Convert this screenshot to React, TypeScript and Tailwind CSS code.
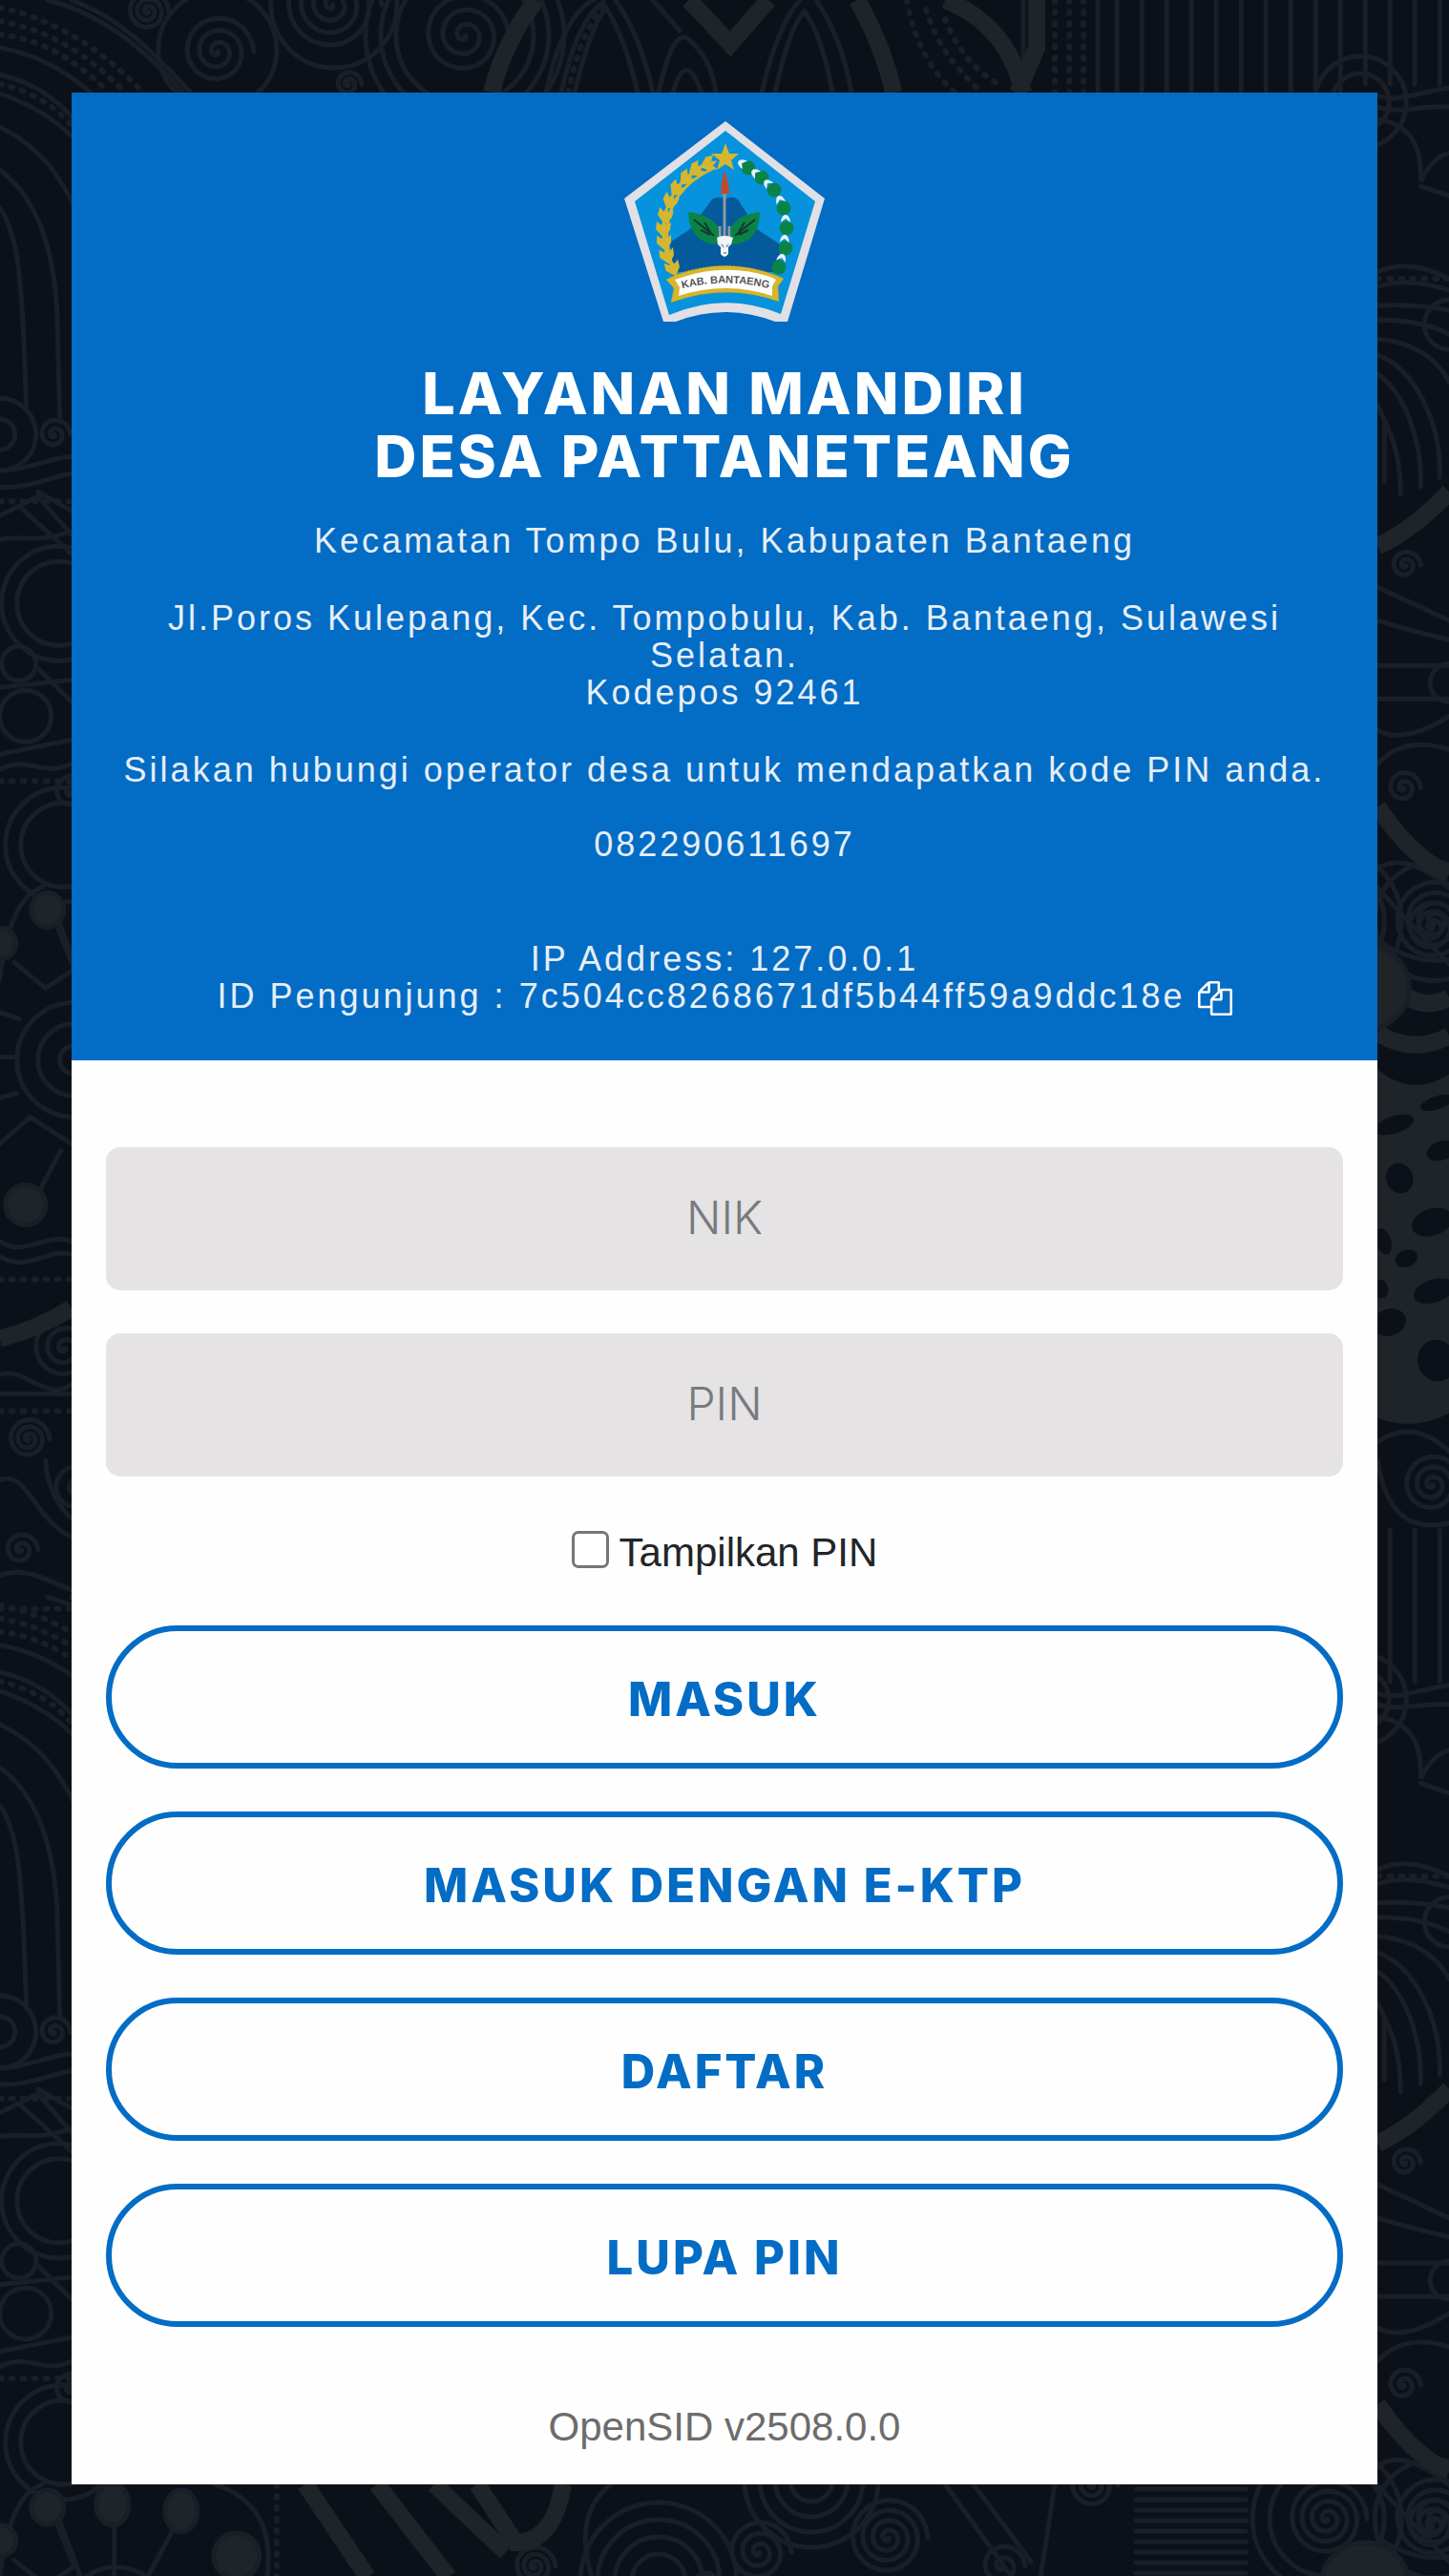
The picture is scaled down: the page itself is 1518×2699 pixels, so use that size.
import { useState } from "react";

const LINE = "#1a1e26";
const SOLID = "#1f2429";
const TILE = 1673;

function spiralPath(cx: number, cy: number, r: number, turns: number) {
  const steps = turns * 24;
  const points: string[] = [];
  for (let i = 0; i <= steps; i++) {
    const a = (i / 24) * Math.PI * 2;
    const d = (r * i) / steps;
    points.push(`${(cx + Math.cos(a) * d).toFixed(1)},${(cy + Math.sin(a) * d).toFixed(1)}`);
  }
  return "M" + points.join("L");
}

// cx, cy, radius, turns
const spirals: number[][] = [
  [155, 12, 22, 3], [228, 54, 38, 3], [348, 5, 52, 4], [487, 37, 46, 3], [57, 455, 17, 2],
  [75, 830, 20, 2], [68, 1412, 36, 3], [30, 1507, 22, 3], [80, 1560, 28, 2], [22, 1623, 18, 2],
  [1472, 592, 16, 2], [1470, 825, 18, 2], [1500, 971, 28, 3], [1500, 1555, 32, 3], [365, 88, 14, 2],
  [795, 1000, 34, 3], [930, 985, 42, 4], [1145, 930, 26, 3], [1390, 965, 42, 4], [1502, 965, 44, 4],
  [1050, 1015, 24, 2], [560, 1015, 22, 3],
];

// cx, cy, radius
const rings: number[][] = [
  [228, 52, 62], [487, 37, 72], [487, 37, 88], [487, 37, 104], [350, 5, 66], [0, 455, 38], [0, 455, 16],
  [62, 632, 44], [62, 632, 60], [20, 695, 18], [27, 750, 27], [66, 885, 44], [66, 885, 60],
  [78, 1110, 15], [78, 1110, 38], [78, 1110, 60], [690, 1030, 82], [690, 1030, 64], [690, 1030, 46],
  [690, 1030, 28], [850, 925, 22], [850, 925, 38], [850, 925, 54], [850, 925, 70], [1390, 965, 60],
  [1390, 965, 78], [1502, 965, 62], [1425, 107, 48], [1425, 107, 30], [1518, 340, 26], [1518, 715, 20],
];

const lines = [
  "M50 0C110 15 155 55 195 100", "M75 0C130 20 165 60 200 97", "M0 50C40 57 70 75 95 97",
  "M0 78C40 88 60 105 78 125", "M0 98C30 108 55 122 78 145", "M0 133C45 155 62 185 78 215",
  "M0 178C50 215 58 290 60 325L63 440", "M0 218C20 245 22 300 25 350L28 430",
  "M0 492C20 495 50 480 75 478", "M0 510C30 512 50 500 75 496", "M0 540L40 520L75 560M20 530L75 580M40 515L75 535",
  "M0 565C25 560 40 570 75 556", "M0 720L75 712M40 700L75 735", "M0 790L75 775M0 806C30 790 45 815 75 800",
  "M60 970L78 1015M15 1008L48 1035L78 1015", "M0 1060L20 1067M0 1107H17M0 1150L18 1145M0 1198L32 1170L78 1200",
  "M40 1250L64 1205", "M0 1300C25 1318 50 1290 75 1300M0 1316C30 1334 50 1306 75 1314",
  "M0 1440C25 1430 50 1470 75 1450M0 1460H75", "M0 1550C30 1540 35 1590 75 1610M48 1530C50 1570 75 1590 75 1590",
  "M0 1650C25 1640 50 1655 75 1665",
  "M572 97Q590 15 622 0M602 97Q618 30 635 8Q655 40 668 97M588 97Q605 20 632 2M645 0Q672 40 684 97",
  "M690 97Q705 30 720 40Q745 60 750 97M705 97Q718 50 735 97M684 0L712 32",
  "M798 97Q815 25 838 0M812 97Q826 30 843 12Q862 40 872 97M855 0Q882 40 892 97",
  "M1072 0V60M1150 0V97", "M1443 100C1460 108 1480 98 1518 92M1443 112C1465 120 1490 110 1518 112",
  "M1443 125C1475 130 1490 150 1488 190Q1500 165 1518 160M1488 195L1518 205",
  "M1443 285Q1475 270 1518 292M1443 300Q1475 290 1518 304",
  "M1443 320Q1480 318 1518 325M1443 335Q1490 335 1518 350M1443 355C1480 358 1505 375 1518 400",
  "M1443 372C1480 385 1510 440 1508 500M1443 392C1470 410 1490 460 1488 510M1443 425C1455 450 1467 470 1467 518M1450 440V505",
  "M1443 615L1518 650M1443 650Q1475 660 1518 670M1443 697H1518M1443 732H1518M1443 765Q1470 780 1518 750",
  "M1443 800Q1470 770 1518 785M1443 910Q1470 890 1518 930M1443 930Q1470 960 1518 1010M1443 985Q1480 1010 1518 1005",
  "M1443 1510Q1480 1485 1518 1520M1443 1530Q1455 1610 1518 1595",
  "M990 929L1060 1026M1020 929L1080 1010M1105 929L1090 1026M640 929Q600 960 620 1026",
  "M0 1026Q10 940 45 929M85 1026L60 960M120 1026V960M155 1026L185 970M90 1026Q120 1005 155 1026M225 929Q290 950 280 1026",
];

const bands = [
  "M562 0Q530 40 515 97", "M722 0L765 46L805 0", "M898 0Q926 50 936 97", "M990 0Q1055 25 1072 97",
  "M1086 0V50L1066 97", "M0 1402Q40 1392 75 1370", "M1443 572Q1480 555 1518 515",
  "M1443 845Q1480 900 1518 915", "M1443 1015Q1480 1065 1518 1045", "M1443 1082Q1480 1105 1518 1085",
  "M320 929L385 1026", "M395 929L470 1026", "M455 929L530 1000", "M590 929Q580 990 540 990L500 929",
];

const dashes = [
  "M0 8C60 20 110 55 150 97", "M0 22C55 32 95 60 132 97", "M0 36C50 42 85 68 114 97", "M0 88C35 96 60 112 78 135",
  "M950 0Q960 60 1000 97", "M970 10Q985 60 1030 97", "M990 20Q1010 70 1050 90", "M1105 0V97", "M1120 0V97", "M1135 0V97",
  "M595 97Q612 22 636 4", "M0 525H75", "M0 818H75", "M0 1340H75", "M0 1685H75", "M0 1478H75", "M290 929V1026", "M1443 292H1518",
];

// cx, cy, rx, ry
const blobs: number[][] = [
  [50, 953, 17, 18], [2, 988, 15, 16], [27, 1262, 21, 21], [118, 950, 17, 22], [190, 957, 17, 22],
  [248, 1004, 24, 24], [1430, 1034, 46, 44], [740, 1034, 12, 12],
];

// Dark gaps in the solid leaf area on the right edge
const gaps: number[][] = [
  [1460, 1178, 22, 9], [1466, 1234, 14, 16], [1510, 1205, 16, 10], [1500, 1280, 22, 14], [1473, 1318, 12, 9],
  [1502, 1352, 22, 12], [1449, 1300, 8, 14], [1455, 1385, 18, 14], [1505, 1425, 20, 22], [1446, 1350, 8, 10], [1505, 1155, 18, 7],
];

function BatikTile({ y }: { y: number }) {
  return (
    <g transform={`translate(0 ${y})`} fill="none" stroke={LINE} strokeWidth="5" strokeLinecap="round">
      {Array.from({ length: 14 }, (_, i) => (
        <path key={i} d={`M${1170 + i * 26} -70V${i < 10 ? 97 : 88}`} />
      ))}
      {Array.from({ length: 9 }, (_, i) => (
        <path key={i} d={`M1190 ${934 + i * 11}H1305`} />
      ))}
      {lines.map((d) => <path key={d} d={d} />)}
      {dashes.map((d) => <path key={d} d={d} strokeWidth="6" strokeDasharray="2 10" />)}
      {rings.map(([cx, cy, r], i) => <circle key={i} cx={cx} cy={cy} r={r} />)}
      {spirals.map(([cx, cy, r, t], i) => <path key={i} d={spiralPath(cx, cy, r, t)} />)}
      {bands.map((d) => <path key={d} d={d} stroke={SOLID} strokeWidth="18" strokeLinecap="butt" />)}
      <path d="M1443 1120Q1480 1150 1518 1125V1480Q1480 1500 1443 1485Z" fill={SOLID} stroke="none" />
      {gaps.map(([cx, cy, rx, ry], i) => (
        <ellipse key={i} cx={cx} cy={cy} rx={rx} ry={ry} fill="#0c1119" stroke="none" transform={`rotate(-18 ${cx} ${cy})`} />
      ))}
      {blobs.map(([cx, cy, rx, ry], i) => (
        <ellipse key={i} cx={cx} cy={cy} rx={rx} ry={ry} fill={SOLID} />
      ))}
    </g>
  );
}

function Backdrop() {
  return (
    <svg className="absolute inset-0 h-full w-full" viewBox="0 0 1518 2699" preserveAspectRatio="xMidYMin slice" aria-hidden="true">
      <BatikTile y={0} />
      <BatikTile y={TILE} />
    </svg>
  );
}

// x, y, rotation of each grain on the left of the wreath
const grains: number[][] = [
  [88, 45, 70], [75, 51, 55], [65, 60, 45], [55, 71, 35], [48, 84, 22],
  [43, 99, 8], [41, 113, 0], [42, 127, -8], [45, 141, -14], [51, 154, -20],
];
const cotton: number[][] = [[130, 49], [144, 59], [157, 72], [167, 91], [170, 112], [169, 133], [162, 153]];
const husks: number[][] = [
  [123, 44, -60], [137, 54, -52], [150, 65, -42], [163, 82, -20], [169, 102, 0], [168, 123, 5], [165, 143, 14],
];

function Crest() {
  return (
    <svg className="mx-auto size-[210px] tracking-normal" viewBox="0 0 210 210" role="img" aria-label="Kabupaten Bantaeng">
      <path d="M106 0L210 81L171 210H158Q106 190 54 210H41L0 81Z" fill="#e0e0e6" />
      <path d="M106 10L200 84L164 202Q106 178 47 203L11 84Z" fill="#0792dd" />
      <path d="M48 127L69 113L92 82Q97 78 106 81Q114 78 119 82L139 113L163 129V158H52Z" fill="#055a9c" />
      <path d="M92 50C50 70 34 105 52 158" fill="none" stroke="#d6b62f" strokeWidth="3" />
      {grains.map(([x, y, r], i) => (
        <path key={i} d="M0 9L-8 0L-7 -8L-2 -4L0 -10L3 -4L8 -7L7 1Z" fill="#d6b62f" transform={`translate(${x} ${y}) rotate(${r})`} />
      ))}
      {cotton.map(([x, y], i) => <circle key={i} cx={x} cy={y} r="7.5" fill="#0a8446" />)}
      {husks.map(([x, y, r], i) => (
        <path key={i} d="M-5 4Q-4 -4 0 -4Q4 -4 5 4L0 0Z" fill="#e6f3fb" transform={`translate(${x} ${y}) rotate(${r})`} />
      ))}
      <path d="M106 23L110 34H120L112 41L115 51L106 45L97 51L100 41L91 34H102Z" fill="#d6b62f" />
      <path d="M105 51L109 65L110 76H101L102 64Z" fill="#c04b2c" />
      <path d="M105 76V124M100 110V122M110 110V122" stroke="#8f9aa6" strokeWidth="3" />
      <path d="M67 95Q92 98 99 113L98 129Q68 128 67 95Z" fill="#0a8446" />
      <path d="M142 95Q118 98 111 113L112 129Q142 128 142 95Z" fill="#0a8446" />
      <path d="M73 103L94 120M80 114L90 119M84 106L90 116M137 103L116 120M130 114L120 119M126 106L120 116" stroke="#16372f" strokeWidth="2" />
      <path d="M97 122Q105 118 114 122L112 129L109 132V139Q105 145 101 139V132L98 129Z" fill="#f1f5f8" />
      <path d="M102 129L104 132M109 129L107 132M104 138H107" stroke="#9aa8b2" strokeWidth="2" />
      <path d="M44 166L54 161Q106 142 158 161L167 165L161 173L162 189Q106 169 49 190L52 175Z" fill="#d6b62f" stroke="#b59a24" strokeDasharray="2 2" />
      <path d="M53 166L59 164Q106 148 153 163L159 166L155 173V183Q106 167 57 183L58 174Z" fill="#fdfdfd" />
      <path id="crest-ribbon" d="M58 176Q106 163 154 176" fill="none" />
      <text fontFamily="Liberation Sans, sans-serif" fontSize="11" fontWeight="700" fill="#555">
        <textPath href="#crest-ribbon" startOffset="50%" textAnchor="middle">KAB. BANTAENG</textPath>
      </text>
    </svg>
  );
}

const actions = ["MASUK", "MASUK DENGAN E-KTP", "DAFTAR", "LUPA PIN"];

const fieldClass =
  "block h-[150px] w-full rounded-[15px] bg-[#e5e3e4] px-9 pb-1 text-center font-['Inter',sans-serif] text-[48px] font-light text-gray-800 placeholder:text-[#777a80]";

export default function App() {
  const [showPin, setShowPin] = useState(false);
  return (
    <main className="relative min-h-screen overflow-hidden bg-[#0c1119] px-[75px] py-[97px] font-['Liberation_Sans',sans-serif]">
      <Backdrop />
      <section className="relative bg-[#fefefe]">
        <header className="bg-[#036cc5] px-9 pt-[30px] pb-12 text-center text-[36px] leading-[39px] tracking-[3px] text-[#e6eef5]">
          <Crest />
          <h1 className="mt-[42px] font-['Inter',sans-serif] text-[61px] leading-[66px] font-extrabold text-white">
            LAYANAN MANDIRI
            <br />
            DESA PATTANETEANG
          </h1>
          <p className="mt-9">Kecamatan Tompo Bulu, Kabupaten Bantaeng</p>
          <p className="mt-[42px]">
            Jl.Poros Kulepang, Kec. Tompobulu, Kab. Bantaeng, Sulawesi Selatan.
            <br />
            Kodepos 92461
          </p>
          <p className="mt-[42px]">Silakan hubungi operator desa untuk mendapatkan kode PIN anda.</p>
          <p className="mt-[39px]">082290611697</p>
          <p className="mt-[81px]">
            IP Address: 127.0.0.1
            <br />
            ID Pengunjung : 7c504cc8268671df5b44ff59a9ddc18e{" "}
            <button type="button" aria-label="Salin ID Pengunjung" className="-my-1 inline-block h-9 align-middle text-white">
              <svg className="size-9" viewBox="0 0 1792 1792" fill="currentColor" aria-hidden="true">
                <path d="M1696 384q40 0 68 28t28 68v1216q0 40-28 68t-68 28h-960q-40 0-68-28t-28-68v-288h-544q-40 0-68-28t-28-68v-672q0-40 20-88t48-76l408-408q28-28 76-48t88-20h416q40 0 68 28t28 68v328q68-40 128-40h416zm-544 213l-299 299h299v-299zm-640-384l-299 299h299v-299zm196 647l316-316v-416h-384v416q0 40-28 68t-68 28h-416v640h512v-256q0-40 20-88t48-76zm956 804v-1152h-384v416q0 40-28 68t-68 28h-416v640h896z" />
              </svg>
            </button>
          </p>
        </header>
        <form className="px-9 pt-[91px]" onSubmit={(e) => e.preventDefault()}>
          <div className="flex flex-col gap-[45px]">
            <input type="text" aria-label="NIK" placeholder="NIK" className={fieldClass} />
            <input type={showPin ? "text" : "password"} aria-label="PIN" placeholder="PIN" className={fieldClass} />
          </div>
          <div className="flex h-[156px] items-center justify-center gap-[11px] text-[42px] leading-[48px] text-[#212529]">
            <input
              id="show-pin"
              type="checkbox"
              checked={showPin}
              onChange={(e) => setShowPin(e.target.checked)}
              className="mb-1 size-[39px] appearance-none rounded-[7px] border-[3px] border-[#767676] bg-white checked:bg-[#036cc5]"
            />
            <label htmlFor="show-pin" className="pt-1">Tampilkan PIN</label>
          </div>
          <div className="flex flex-col gap-[45px]">
            {actions.map((label) => (
              <button
                key={label}
                type="button"
                className="h-[150px] w-full rounded-full border-[6px] border-[#036cc5] pt-1.5 font-['Inter',sans-serif] text-[49px] font-extrabold tracking-[3px] text-[#036cc5]"
              >
                {label}
              </button>
            ))}
          </div>
        </form>
        <footer className="pt-[81px] pb-9 text-center text-[42px] leading-[48px] text-[#6c6c6c]">OpenSID v2508.0.0</footer>
      </section>
    </main>
  );
}
